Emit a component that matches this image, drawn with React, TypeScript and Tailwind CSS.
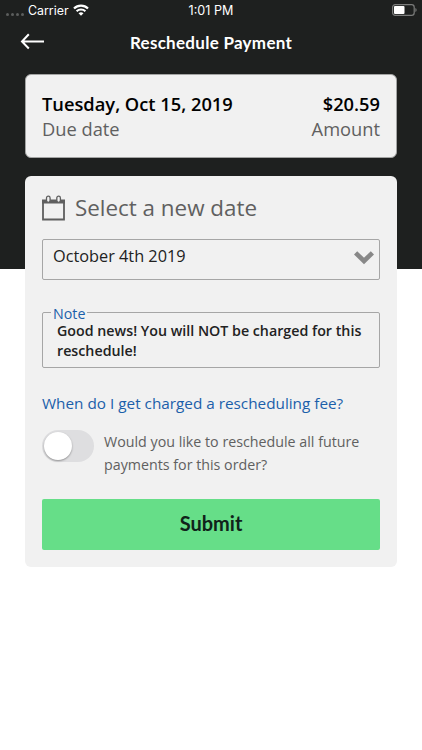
import React from 'react'

const StatusBar: React.FC = () => {
  return (
    <div className="relative flex h-5 items-center justify-center font-['Inter'] text-white">
      <div className="absolute left-1.5 top-0 flex h-5 items-center">
        <div className="mt-2 flex gap-0.5">
          <span className="size-[3px] rounded-full bg-[#5c5e5d]" />
          <span className="size-[3px] rounded-full bg-[#5c5e5d]" />
          <span className="size-[3px] rounded-full bg-[#5c5e5d]" />
          <span className="size-[3px] rounded-full bg-[#5c5e5d]" />
        </div>
        <span className="ml-1 w-10 pt-px text-[12.4px] leading-5">Carrier</span>
        <svg width="16" height="12" viewBox="0 0 16 12" className="ml-[5px]">
          <path d="M1 4.5a9.9 9.9 0 0 1 14 0" fill="none" stroke="white" strokeWidth="2.2" />
          <path d="M3.6 7.3a6.3 6.3 0 0 1 8.8 0" fill="none" stroke="white" strokeWidth="2.1" />
          <path d="M8 11.8 5.5 9.3a3.7 3.7 0 0 1 5 0z" fill="white" />
        </svg>
      </div>
      <span className="pt-px text-[12.6px] leading-5">1:01 PM</span>
      <svg width="26" height="12" viewBox="0 0 26 12" className="absolute left-[391.5px] top-1">
        <rect x="0.6" y="0.6" width="21.6" height="10.8" rx="2.6" fill="none" stroke="#7b7c7b" strokeWidth="1.2" />
        <rect x="2" y="2" width="10.5" height="8" rx="1" fill="white" />
        <path d="M23.4 4c1.6.6 1.6 3.4 0 4z" fill="#7b7c7b" />
      </svg>
    </div>
  )
}

const Header: React.FC = () => {
  return (
    <header className="relative flex h-[54px] items-start justify-center pt-[11px] text-white">
      <button type="button" aria-label="Back" className="absolute left-5 top-3">
        <svg width="24" height="18" viewBox="0 0 24 18" fill="none" stroke="white" strokeWidth="2">
          <path d="M8.8 2.2 2 9.5l6.8 7M2 9.5h22" />
        </svg>
      </button>
      <h1 className="font-['Lato'] text-[17px] font-bold leading-6 tracking-[0.28px]">Reschedule Payment</h1>
    </header>
  )
}

const PaymentCard: React.FC = () => {
  return (
    <section className="flex h-[84px] justify-between rounded-md border border-[#a3a4a3] bg-[#f1f1f1] px-4 pt-4">
      <div>
        <p className="text-[18.3px] font-semibold leading-[25px] text-black">Tuesday, Oct 15, 2019</p>
        <p className="text-[18.3px] leading-[25px] text-[#606060]">Due date</p>
      </div>
      <div className="text-right">
        <p className="text-[18.3px] font-semibold leading-[25px] text-black">$20.59</p>
        <p className="text-[18.3px] leading-[25px] text-[#606060]">Amount</p>
      </div>
    </section>
  )
}

const RescheduleForm: React.FC = () => {
  return (
    <section className="mt-[18px] h-[391px] rounded-md bg-[#f1f1f1] px-[17px] pt-4">
      <div className="flex h-8 items-center">
        <svg width="23" height="26" viewBox="0 0 23 26" fill="none">
          <path d="M1 6h21v18.5H1z" stroke="#5f5f5f" strokeWidth="1.8" />
          <path d="M0 4.5h23v4H0z" fill="#5f5f5f" />
          <rect x="4.5" y="1.2" width="3.6" height="6.2" rx="1.8" fill="#f1f1f1" stroke="#5f5f5f" strokeWidth="1.3" />
          <rect x="14.8" y="1.2" width="3.6" height="6.2" rx="1.8" fill="#f1f1f1" stroke="#5f5f5f" strokeWidth="1.3" />
        </svg>
        <h2 className="ml-2.5 text-[22.4px] leading-8 text-[#606060]">Select a new date</h2>
      </div>

      <div className="mt-[15px] flex h-[41px] justify-between rounded-xs border border-[#a6a6a6] pl-2.5 pr-[5px]">
        <span className="text-[16.3px] leading-[33px] text-[#222]">October 4th 2019</span>
        <svg width="20" height="14" viewBox="0 0 20 14" className="mt-[11px]">
          <path d="m1.6 1.8 8.4 8.2 8.4-8.2" fill="none" stroke="#888" strokeWidth="4.6" />
        </svg>
      </div>

      <fieldset className="mt-[22px] h-[66px] rounded-xs border border-[#a6a6a6] pl-3.5">
        <legend className="-ml-[6px] px-[2px] pt-1 text-[14.25px] leading-4 text-[#1b5faa]">Note</legend>
        <p className="-mt-px whitespace-nowrap text-[14.25px] font-semibold leading-5 text-[#222]">
          Good news! You will NOT be charged for this
          <br />
          reschedule!
        </p>
      </fieldset>

      <a href="#" className="mt-[23px] block text-[15.3px] leading-6 text-[#1b5faa]">
        When do I get charged a rescheduling fee?
      </a>

      <div className="mt-[15px] flex h-[46px]">
        <button
          type="button"
          role="switch"
          aria-checked="false"
          className="flex h-8 w-[52px] shrink-0 items-center rounded-full bg-[#dedee0] pl-[1.5px]"
        >
          <span className="size-7 rounded-full bg-white shadow-[0_1px_2px_rgba(0,0,0,0.35)]" />
        </button>
        <p className="ml-2.5 whitespace-nowrap pt-px text-[14.25px] leading-[22.5px] text-[#606060]">
          Would you like to reschedule all future
          <br />
          payments for this order?
        </p>
      </div>

      <button
        type="button"
        className="mt-[23px] h-[51px] w-full rounded-xs bg-[#66de88] pb-1 font-['Lato'] text-[20px] font-bold text-[#10231a]"
      >
        Submit
      </button>
    </section>
  )
}

export default function App() {
  return (
    <div className="h-[750px] w-[422px] overflow-hidden bg-[linear-gradient(#1e201f_269px,#fff_269px)] font-['Open_Sans',sans-serif]">
      <StatusBar />
      <Header />
      <main className="px-[25px]">
        <PaymentCard />
        <RescheduleForm />
      </main>
    </div>
  )
}
